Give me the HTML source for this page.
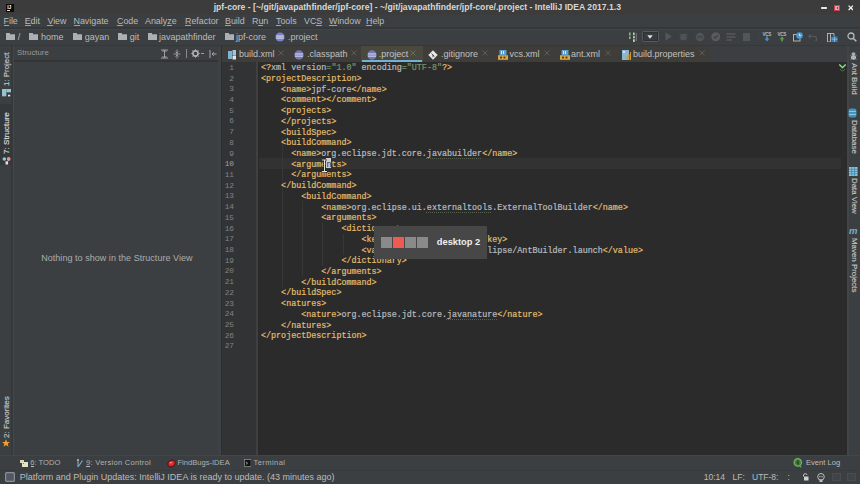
<!DOCTYPE html>
<html><head><meta charset="utf-8">
<style>
*{margin:0;padding:0;box-sizing:border-box}
html,body{width:860px;height:484px;overflow:hidden;background:#3c3f41;font-family:"Liberation Sans",sans-serif;color:#bbbbbb;position:relative}
.a{position:absolute;white-space:pre}
.code{font-family:"Liberation Mono",monospace;font-size:8.4px;-webkit-text-stroke:0.2px currentColor;line-height:10.72px;color:#b8bcc0}
.ln{font-family:"Liberation Mono",monospace;line-height:10.72px;color:#808386;text-align:right}
.t{color:#e2bd6e}
.av{color:#7a9266}
.at{color:#bababa}
.u{text-decoration:underline dotted #56604f;text-decoration-thickness:0.8px;text-underline-offset:1.6px}
.vt{transform-origin:0 0}
</style></head><body>

<div class="a" style="left:0px;top:0px;width:860px;height:15px;background:#3c3c3c;"></div>
<div class="a" style="left:213.70px;top:2.72px;font-size:8.6px;line-height:8.6px;color:#d8d8d8;font-weight:bold;letter-spacing:0.02px">jpf-core - [~/git/javapathfinder/jpf-core] - ~/git/javapathfinder/jpf-core/.project - IntelliJ IDEA 2017.1.3</div>
<div class="a" style="left:6px;top:4px;width:8px;height:8px;background:#0a0a0a;"></div>
<div class="a" style="left:7.20px;top:5.07px;font-size:5px;line-height:5px;color:#ffffff;font-weight:bold;">IJ</div>
<div class="a" style="left:7.3px;top:10px;width:3px;height:0.7px;background:#dddddd;"></div>
<div class="a" style="left:821px;top:7.2px;width:6px;height:1.5px;background:#e8e8e8;border-radius:0.7px"></div>
<div class="a" style="left:834.4px;top:5px;width:5.8px;height:5.8px;background:#e8a0a8;border:1.3px solid #c84050"></div>
<div class="a" style="left:836.6px;top:7.2px;width:1.4px;height:1.4px;background:#b03040;"></div>
<svg class="a" style="left:847.8px;top:5.2px" width="5.6" height="5.6" viewBox="0 0 5.6 5.6"><path d="M0.6 0.6L5 5M5 0.6L0.6 5" stroke="#f4f4f4" stroke-width="1.3"/></svg>
<div class="a" style="left:0px;top:15px;width:860px;height:13px;background:#3c3f41;"></div>
<div class="a" style="left:3.50px;top:16.77px;font-size:8.9px;line-height:8.9px;color:#bbbbbb;">File</div>
<div class="a" style="left:3.5px;top:25px;width:5.44px;height:0.8px;background:#a0a0a0;"></div>
<div class="a" style="left:24.70px;top:16.77px;font-size:8.9px;line-height:8.9px;color:#bbbbbb;">Edit</div>
<div class="a" style="left:24.7px;top:25px;width:5.94px;height:0.8px;background:#a0a0a0;"></div>
<div class="a" style="left:47.40px;top:16.77px;font-size:8.9px;line-height:8.9px;color:#bbbbbb;">View</div>
<div class="a" style="left:47.4px;top:25px;width:5.94px;height:0.8px;background:#a0a0a0;"></div>
<div class="a" style="left:73.50px;top:16.77px;font-size:8.9px;line-height:8.9px;color:#bbbbbb;">Navigate</div>
<div class="a" style="left:73.5px;top:25px;width:6.43px;height:0.8px;background:#a0a0a0;"></div>
<div class="a" style="left:117.00px;top:16.77px;font-size:8.9px;line-height:8.9px;color:#bbbbbb;">Code</div>
<div class="a" style="left:117.0px;top:25px;width:6.43px;height:0.8px;background:#a0a0a0;"></div>
<div class="a" style="left:145.00px;top:16.77px;font-size:8.9px;line-height:8.9px;color:#bbbbbb;">Analyze</div>
<div class="a" style="left:167.26px;top:25px;width:4.45px;height:0.8px;background:#a0a0a0;"></div>
<div class="a" style="left:185.00px;top:16.77px;font-size:8.9px;line-height:8.9px;color:#bbbbbb;">Refactor</div>
<div class="a" style="left:185.0px;top:25px;width:6.43px;height:0.8px;background:#a0a0a0;"></div>
<div class="a" style="left:225.00px;top:16.77px;font-size:8.9px;line-height:8.9px;color:#bbbbbb;">Build</div>
<div class="a" style="left:225.0px;top:25px;width:5.94px;height:0.8px;background:#a0a0a0;"></div>
<div class="a" style="left:252.00px;top:16.77px;font-size:8.9px;line-height:8.9px;color:#bbbbbb;">Run</div>
<div class="a" style="left:258.43px;top:25px;width:4.95px;height:0.8px;background:#a0a0a0;"></div>
<div class="a" style="left:276.00px;top:16.77px;font-size:8.9px;line-height:8.9px;color:#bbbbbb;">Tools</div>
<div class="a" style="left:276.0px;top:25px;width:5.44px;height:0.8px;background:#a0a0a0;"></div>
<div class="a" style="left:304.00px;top:16.77px;font-size:8.9px;line-height:8.9px;color:#bbbbbb;">VCS</div>
<div class="a" style="left:316.36px;top:25px;width:5.94px;height:0.8px;background:#a0a0a0;"></div>
<div class="a" style="left:329.00px;top:16.77px;font-size:8.9px;line-height:8.9px;color:#bbbbbb;">Window</div>
<div class="a" style="left:329.0px;top:25px;width:8.4px;height:0.8px;background:#a0a0a0;"></div>
<div class="a" style="left:366.00px;top:16.77px;font-size:8.9px;line-height:8.9px;color:#bbbbbb;">Help</div>
<div class="a" style="left:366.0px;top:25px;width:6.43px;height:0.8px;background:#a0a0a0;"></div>
<div class="a" style="left:0px;top:28px;width:860px;height:18px;background:#3c3f41;"></div>
<div class="a" style="left:0px;top:45px;width:860px;height:1.5px;background:#35383a;"></div>
<div class="a" style="left:0px;top:27px;width:860px;height:1.6px;background:#35383a;"></div>
<div class="a" style="left:0px;top:28.6px;width:860px;height:1.4px;background:#424547;"></div>
<div class="a" style="left:6px;top:33.5px;width:9px;height:6.5px;background:#aab0b6;"></div>
<div class="a" style="left:6px;top:32.5px;width:4px;height:2px;background:#aab0b6;"></div>
<div class="a" style="left:10px;top:33.5px;width:5px;height:1px;background:#8d9398;"></div>
<div class="a" style="left:17.70px;top:32.68px;font-size:9px;line-height:9px;color:#bbbbbb;">/</div>
<div class="a" style="left:29.4px;top:33.5px;width:9px;height:6.5px;background:#aab0b6;"></div>
<div class="a" style="left:29.4px;top:32.5px;width:4px;height:2px;background:#aab0b6;"></div>
<div class="a" style="left:33.4px;top:33.5px;width:5px;height:1px;background:#8d9398;"></div>
<div class="a" style="left:41.00px;top:32.68px;font-size:9px;line-height:9px;color:#bbbbbb;">home</div>
<div class="a" style="left:72.5px;top:33.5px;width:9px;height:6.5px;background:#aab0b6;"></div>
<div class="a" style="left:72.5px;top:32.5px;width:4px;height:2px;background:#aab0b6;"></div>
<div class="a" style="left:76.5px;top:33.5px;width:5px;height:1px;background:#8d9398;"></div>
<div class="a" style="left:84.70px;top:32.68px;font-size:9px;line-height:9px;color:#bbbbbb;">gayan</div>
<div class="a" style="left:117.6px;top:33.5px;width:9px;height:6.5px;background:#aab0b6;"></div>
<div class="a" style="left:117.6px;top:32.5px;width:4px;height:2px;background:#aab0b6;"></div>
<div class="a" style="left:121.6px;top:33.5px;width:5px;height:1px;background:#8d9398;"></div>
<div class="a" style="left:129.70px;top:32.68px;font-size:9px;line-height:9px;color:#bbbbbb;">git</div>
<div class="a" style="left:148px;top:33.5px;width:9px;height:6.5px;background:#aab0b6;"></div>
<div class="a" style="left:148px;top:32.5px;width:4px;height:2px;background:#aab0b6;"></div>
<div class="a" style="left:152px;top:33.5px;width:5px;height:1px;background:#8d9398;"></div>
<div class="a" style="left:159.00px;top:32.68px;font-size:9px;line-height:9px;color:#bbbbbb;">javapathfinder</div>
<div class="a" style="left:225px;top:33.5px;width:9px;height:6.5px;background:#aab0b6;"></div>
<div class="a" style="left:225px;top:32.5px;width:4px;height:2px;background:#aab0b6;"></div>
<div class="a" style="left:229px;top:33.5px;width:5px;height:1px;background:#8d9398;"></div>
<div class="a" style="left:236.00px;top:32.68px;font-size:9px;line-height:9px;color:#bbbbbb;">jpf-core</div>
<svg class="a" style="left:275px;top:32px" width="10" height="10" viewBox="0 0 10 10"><circle cx="5" cy="5" r="4.6" fill="#7b80c8"/><rect x="1.2" y="3.6" width="7.6" height="1" fill="#e6e6f4"/><rect x="1.2" y="5.6" width="7.6" height="1" fill="#e6e6f4"/></svg>
<div class="a" style="left:288.00px;top:32.68px;font-size:9px;line-height:9px;color:#bbbbbb;">.project</div>
<div class="a" style="left:0px;top:46px;width:13px;height:408.6px;background:#3c3f41;"></div>
<div class="a" style="left:11px;top:46px;width:1.7px;height:408.6px;background:#36393b;"></div>
<div class="a" style="left:12.7px;top:46px;width:1.6px;height:408.6px;background:#45484a;"></div>
<div class="a" style="left:0px;top:104px;width:11.8px;height:61px;background:#35383a;"></div>
<div class="a vt" style="left:2.90px;top:86.00px;font-size:7.9px;line-height:7.9px;color:#c4c4c4;transform:rotate(-90deg);-webkit-text-stroke:0.15px currentColor">1: Project</div>
<div class="a vt" style="left:2.90px;top:153.50px;font-size:8.1px;line-height:8.1px;color:#dddddd;transform:rotate(-90deg);-webkit-text-stroke:0.15px currentColor">7: Structure</div>
<div class="a vt" style="left:2.90px;top:437.50px;font-size:8.0px;line-height:8.0px;color:#c4c4c4;transform:rotate(-90deg);-webkit-text-stroke:0.15px currentColor">2: Favorites</div>
<div class="a" style="left:14px;top:46px;width:207px;height:408.6px;background:#3c3f41;"></div>
<div class="a" style="left:14px;top:60px;width:207px;height:1.5px;background:#323436;"></div>
<div class="a" style="left:17.10px;top:49.20px;font-size:7.8px;line-height:7.8px;color:#9a9a9a;">Structure</div>
<div class="a" style="left:41.20px;top:253.58px;font-size:9px;line-height:9px;color:#acacac;letter-spacing:0.04px">Nothing to show in the Structure View</div>
<div class="a" style="left:218px;top:46px;width:3px;height:408.6px;background:#3f4244;"></div>
<div class="a" style="left:221px;top:46px;width:1px;height:408.6px;background:#2c2f31;"></div>
<div class="a" style="left:222px;top:46px;width:625px;height:16px;background:#3c3f41;"></div>
<div class="a" style="left:222px;top:46px;width:488px;height:16px;background:#3e3d39;"></div>
<svg class="a" style="left:227.8px;top:49.5px" width="9" height="10" viewBox="0 0 9 10"><rect x="0" y="1" width="4" height="8" fill="#7fb3d5"/><rect x="4.5" y="0" width="3.5" height="5" fill="#9cc7e3"/><rect x="4.5" y="5.5" width="3.5" height="4" fill="#d9e6ee"/></svg>
<div class="a" style="left:239.00px;top:50.18px;font-size:9px;line-height:9px;color:#c0c0c0;">build.xml</div>
<svg class="a" style="left:277.5px;top:50.2px" width="6" height="6" viewBox="0 0 6 6"><path d="M0.5 0.5L5.5 5.5M5.5 0.5L0.5 5.5" stroke="#5e5e5e" stroke-width="0.9"/></svg>
<svg class="a" style="left:294.3px;top:49.5px" width="10" height="10" viewBox="0 0 10 10"><circle cx="5" cy="5" r="4.7" fill="#7378b4"/><rect x="1" y="3.4" width="8" height="1.1" fill="#d4d4ea"/><rect x="1" y="5.6" width="8" height="1.1" fill="#d4d4ea"/></svg>
<div class="a" style="left:306.90px;top:50.18px;font-size:9px;line-height:9px;color:#c0c0c0;">.classpath</div>
<svg class="a" style="left:351px;top:50.2px" width="6" height="6" viewBox="0 0 6 6"><path d="M0.5 0.5L5.5 5.5M5.5 0.5L0.5 5.5" stroke="#5e5e5e" stroke-width="0.9"/></svg>
<div class="a" style="left:361px;top:46px;width:62px;height:16px;background:#4b483e;"></div>
<div class="a" style="left:362px;top:60px;width:60px;height:2px;background:#6fb4d4;"></div>
<svg class="a" style="left:367px;top:49.5px" width="10" height="10" viewBox="0 0 10 10"><circle cx="5" cy="5" r="4.7" fill="#7378b4"/><rect x="1" y="3.4" width="8" height="1.1" fill="#d4d4ea"/><rect x="1" y="5.6" width="8" height="1.1" fill="#d4d4ea"/></svg>
<div class="a" style="left:378.70px;top:50.18px;font-size:9px;line-height:9px;color:#c4c4c4;">.project</div>
<svg class="a" style="left:409.9px;top:50.2px" width="6" height="6" viewBox="0 0 6 6"><path d="M0.5 0.5L5.5 5.5M5.5 0.5L0.5 5.5" stroke="#6b7360" stroke-width="0.9"/></svg>
<svg class="a" style="left:428.4px;top:49.5px" width="10" height="10" viewBox="0 0 10 10"><path d="M5 0.3 L9.7 5 L5 9.7 L0.3 5Z" fill="#e6e6e6"/><path d="M3.6 3.6 L6.4 6.4 M5 5 L5 7.2" stroke="#3c3c3c" stroke-width="0.9"/></svg>
<div class="a" style="left:441.00px;top:50.18px;font-size:9px;line-height:9px;color:#c0c0c0;">.gitignore</div>
<svg class="a" style="left:481.9px;top:50.2px" width="6" height="6" viewBox="0 0 6 6"><path d="M0.5 0.5L5.5 5.5M5.5 0.5L0.5 5.5" stroke="#5e5e5e" stroke-width="0.9"/></svg>
<svg class="a" style="left:497.9px;top:49.5px" width="10" height="10" viewBox="0 0 10 10"><rect x="1.5" y="0" width="7" height="5" fill="#5e9fd0"/><rect x="3" y="1" width="1" height="3" fill="#d8e8f4"/><rect x="5" y="1" width="1" height="3" fill="#d8e8f4"/><rect x="0" y="5.2" width="10" height="4.6" fill="#d6a74a"/><rect x="2" y="6.6" width="2" height="1.8" fill="#5a3a10"/><rect x="5.5" y="6.6" width="2" height="1.8" fill="#5a3a10"/></svg>
<div class="a" style="left:509.50px;top:50.18px;font-size:9px;line-height:9px;color:#c0c0c0;">vcs.xml</div>
<svg class="a" style="left:544px;top:50.2px" width="6" height="6" viewBox="0 0 6 6"><path d="M0.5 0.5L5.5 5.5M5.5 0.5L0.5 5.5" stroke="#5e5e5e" stroke-width="0.9"/></svg>
<svg class="a" style="left:559.8px;top:49.5px" width="10" height="10" viewBox="0 0 10 10"><rect x="1.5" y="0" width="7" height="5" fill="#5e9fd0"/><rect x="3" y="1" width="1" height="3" fill="#d8e8f4"/><rect x="5" y="1" width="1" height="3" fill="#d8e8f4"/><rect x="0" y="5.2" width="10" height="4.6" fill="#d6a74a"/><rect x="2" y="6.6" width="2" height="1.8" fill="#5a3a10"/><rect x="5.5" y="6.6" width="2" height="1.8" fill="#5a3a10"/></svg>
<div class="a" style="left:571.00px;top:50.18px;font-size:9px;line-height:9px;color:#c0c0c0;">ant.xml</div>
<svg class="a" style="left:605px;top:50.2px" width="6" height="6" viewBox="0 0 6 6"><path d="M0.5 0.5L5.5 5.5M5.5 0.5L0.5 5.5" stroke="#5e5e5e" stroke-width="0.9"/></svg>
<svg class="a" style="left:622px;top:49.5px" width="9" height="10" viewBox="0 0 9 10"><rect x="0" y="0" width="7" height="10" fill="#86b7d6"/><rect x="1" y="1" width="2" height="2" fill="#d0e4f0"/><rect x="4.5" y="6" width="1.2" height="4" fill="#d09a30"/><rect x="6.3" y="4" width="1.2" height="6" fill="#d09a30"/><rect x="8" y="2" width="1" height="8" fill="#d09a30"/></svg>
<div class="a" style="left:633.00px;top:50.18px;font-size:9px;line-height:9px;color:#c0c0c0;">build.properties</div>
<svg class="a" style="left:698.7px;top:50.2px" width="6" height="6" viewBox="0 0 6 6"><path d="M0.5 0.5L5.5 5.5M5.5 0.5L0.5 5.5" stroke="#5e5e5e" stroke-width="0.9"/></svg>
<div class="a" style="left:0px;top:44.7px;width:860px;height:1.8px;background:#35383a;"></div>
<div class="a" style="left:222px;top:62px;width:625px;height:392.6px;background:#2b2b2b;"></div>
<div class="a" style="left:222px;top:62px;width:34px;height:392.6px;background:#323335;"></div>
<div class="a" style="left:256px;top:62px;width:2px;height:392.6px;background:#404040;"></div>
<div class="a" style="left:258px;top:62px;width:1px;height:392.6px;background:#2a2a2a;"></div>
<div class="a" style="left:259px;top:158.4px;width:582px;height:10.7px;background:#323232;"></div>
<div class="a" style="left:843px;top:62px;width:1px;height:392px;background:#2e2e2e;"></div>
<div class="a" style="left:282.16px;top:137.04px;width:1px;height:150.08px;background:#373737;"></div>
<div class="a" style="left:302.32px;top:201.36px;width:1px;height:75.04px;background:#373737;"></div>
<div class="a" style="left:322.48px;top:222.8px;width:1px;height:42.88px;background:#373737;"></div>
<div class="a" style="left:342.64px;top:233.52px;width:1px;height:21.44px;background:#373737;"></div>
<div class="a code" style="left:261px;top:63.3px"><span class="t">&lt;?</span><span class="at">xml </span><span class="at">version</span><span class="av">=</span><span class="av">&quot;1.0&quot;</span><span class="at"> encoding</span><span class="av">=</span><span class="av">&quot;UTF-8&quot;</span><span class="t">?&gt;</span>
<span class="t">&lt;projectDescription&gt;</span>
    <span class="t">&lt;name&gt;</span>jpf-core<span class="t">&lt;/name&gt;</span>
    <span class="t">&lt;comment&gt;&lt;/comment&gt;</span>
    <span class="t">&lt;projects&gt;</span>
    <span class="t">&lt;/projects&gt;</span>
    <span class="t">&lt;buildSpec&gt;</span>
    <span class="t">&lt;buildCommand&gt;</span>
      <span class="t">&lt;name&gt;</span>org.eclipse.jdt.core.<span class="u">javabuilder</span><span class="t">&lt;/name&gt;</span>
      <span class="t">&lt;arguments&gt;</span>
      <span class="t">&lt;/arguments&gt;</span>
    <span class="t">&lt;/buildCommand&gt;</span>
        <span class="t">&lt;buildCommand&gt;</span>
            <span class="t">&lt;name&gt;</span>org.eclipse.ui.<span class="u">externaltools</span>.ExternalToolBuilder<span class="t">&lt;/name&gt;</span>
            <span class="t">&lt;arguments&gt;</span>
                <span class="t">&lt;dictionary&gt;</span>
                    <span class="t">&lt;key&gt;</span>LaunchConfigHandle<span class="t">&lt;/key&gt;</span>
                    <span class="t">&lt;value&gt;</span>&amp;lt;project&amp;gt;/eclipse/AntBuilder.launch<span class="t">&lt;/value&gt;</span>
                <span class="t">&lt;/dictionary&gt;</span>
            <span class="t">&lt;/arguments&gt;</span>
        <span class="t">&lt;/buildCommand&gt;</span>
    <span class="t">&lt;/buildSpec&gt;</span>
    <span class="t">&lt;natures&gt;</span>
        <span class="t">&lt;nature&gt;</span>org.eclipse.jdt.core.<span class="u">javanature</span><span class="t">&lt;/nature&gt;</span>
    <span class="t">&lt;/natures&gt;</span>
<span class="t">&lt;/projectDescription&gt;</span>
</div>
<div class="a ln" style="left:214px;top:62.8px;width:20px;font-size:7.8px;">1
2
3
4
5
6
7
8
9
<span style="color:#a4a3a3">10</span>
11
12
13
14
15
16
17
18
19
20
21
22
23
24
25
26
27</div>
<div class="a" style="left:847px;top:46px;width:13px;height:408.6px;background:#3c3f41;"></div>
<div class="a" style="left:846.7px;top:46px;width:2.4px;height:408.6px;background:#434547;"></div>
<svg class="a" style="left:837.5px;top:63px" width="9" height="9" viewBox="0 0 9 9"><path d="M1.3 1.5 L4.5 4.7 L7.7 1.5" stroke="#1f4a1f" stroke-width="2.6" fill="none"/><path d="M1.3 1.5 L4.5 4.7 L7.7 1.5" stroke="#a6d69e" stroke-width="1.3" fill="none"/><path d="M2 6.3 L4.5 8 L7 6.3" stroke="#4e7a4a" stroke-width="0.9" fill="none"/></svg>
<div class="a vt" style="left:857.50px;top:63.00px;font-size:7.9px;line-height:7.9px;color:#c4c4c4;transform:rotate(90deg);-webkit-text-stroke:0.15px currentColor">Ant Build</div>
<div class="a vt" style="left:857.50px;top:120.00px;font-size:7.9px;line-height:7.9px;color:#c4c4c4;transform:rotate(90deg);-webkit-text-stroke:0.15px currentColor">Database</div>
<div class="a vt" style="left:857.50px;top:178.00px;font-size:7.9px;line-height:7.9px;color:#c4c4c4;transform:rotate(90deg);-webkit-text-stroke:0.15px currentColor">Data View</div>
<div class="a vt" style="left:857.50px;top:238.00px;font-size:7.9px;line-height:7.9px;color:#c4c4c4;transform:rotate(90deg);-webkit-text-stroke:0.15px currentColor">Maven Projects</div>
<svg class="a" style="left:850.3px;top:52px" width="7" height="9" viewBox="0 0 7 9"><ellipse cx="3.5" cy="2" rx="2" ry="1.8" fill="#a8acb0"/><ellipse cx="3.5" cy="5.5" rx="2.6" ry="2.2" fill="#c0c4c8"/><path d="M0.3 3.5L6.7 7.5M6.7 3.5L0.3 7.5" stroke="#9a9ea2" stroke-width="0.7"/></svg>
<svg class="a" style="left:848.4px;top:107.8px" width="9" height="10" viewBox="0 0 9 10"><rect x="0.5" y="0.5" width="8" height="9" rx="2.2" fill="#4293b8"/><path d="M1 3.4H8M1 6.4H8" stroke="#9fd2ea" stroke-width="0.9"/></svg>
<svg class="a" style="left:849px;top:166.5px" width="8.5" height="9" viewBox="0 0 8.5 9"><rect x="0" y="0" width="8.5" height="9" fill="#8ac6e0"/><path d="M0 2.3H8.5M0 4.5H8.5M0 6.8H8.5M2.8 0V9M5.6 0V9" stroke="#3f87ad" stroke-width="0.8"/></svg>
<svg class="a" style="left:848.8px;top:227px" width="9" height="8" viewBox="0 0 9 8"><text x="0" y="7.4" font-family="Liberation Sans" font-size="9.5" font-style="italic" font-weight="bold" fill="#72b2cf">m</text></svg>
<div class="a" style="left:0px;top:454.6px;width:860px;height:15.4px;background:#3c3f41;"></div>
<div class="a" style="left:0px;top:454.6px;width:860px;height:1.8px;background:#434648;"></div>
<svg class="a" style="left:19.8px;top:459px" width="8" height="8" viewBox="0 0 8 8"><rect x="0" y="1" width="4" height="3" fill="#d8d8b0"/><rect x="2" y="3" width="6" height="5" fill="#e4e4c0"/><rect x="3" y="4" width="1" height="1" fill="#777"/></svg>
<div class="a" style="left:30.20px;top:458.77px;font-size:7.6px;line-height:7.6px;color:#b0b0b0;">6: TODO</div>
<div class="a" style="left:30.6px;top:466px;width:3.6px;height:0.6px;background:#bbbbbb;"></div>
<svg class="a" style="left:75.5px;top:459px" width="8" height="8.5" viewBox="0 0 8 8.5"><path d="M2 0.5V8M2 8L6.5 1.5" stroke="#7aa6c2" stroke-width="1.2" fill="none"/><circle cx="2" cy="1" r="1.1" fill="#aaa"/></svg>
<div class="a" style="left:86.00px;top:458.77px;font-size:7.6px;line-height:7.6px;color:#b0b0b0;letter-spacing:0.26px">9: Version Control</div>
<div class="a" style="left:86.4px;top:466px;width:3.6px;height:0.6px;background:#bbbbbb;"></div>
<svg class="a" style="left:166.6px;top:458.5px" width="9" height="9" viewBox="0 0 9 9"><ellipse cx="4.5" cy="4.5" rx="3.9" ry="3.1" transform="rotate(-25 4.5 4.5)" fill="#e02828" stroke="#3a1010" stroke-width="0.8"/><ellipse cx="3.8" cy="3.8" rx="1.4" ry="0.8" fill="#ff8080"/></svg>
<div class="a" style="left:177.40px;top:458.77px;font-size:7.6px;line-height:7.6px;color:#b0b0b0;">FindBugs-IDEA</div>
<svg class="a" style="left:243.6px;top:458.5px" width="7.5" height="8" viewBox="0 0 7.5 8"><rect x="0.4" y="0.4" width="6.7" height="7.2" fill="#111" stroke="#9a9a9a" stroke-width="0.7"/><path d="M2 3L3.5 4.2L2 5.4" stroke="#ddd" stroke-width="0.7" fill="none"/></svg>
<div class="a" style="left:253.50px;top:458.77px;font-size:7.6px;line-height:7.6px;color:#b0b0b0;letter-spacing:0.4px">Terminal</div>
<svg class="a" style="left:793px;top:458px" width="10" height="10" viewBox="0 0 10 10"><circle cx="4.8" cy="4.4" r="3.7" fill="#3f7a3a" stroke="#74b06a" stroke-width="1.2"/><path d="M6.5 7.5L8.3 9.5" stroke="#74b06a" stroke-width="1.1"/><rect x="4.2" y="2.6" width="1.3" height="3.8" fill="#1f3f1c"/></svg>
<div class="a" style="left:806.00px;top:458.97px;font-size:7.6px;line-height:7.6px;color:#bdbdbd;">Event Log</div>
<div class="a" style="left:0px;top:470px;width:860px;height:14px;background:#3c3f41;"></div>
<div class="a" style="left:0px;top:469.5px;width:860px;height:1px;background:#383b3d;"></div>
<svg class="a" style="left:5px;top:472px" width="10" height="10" viewBox="0 0 10 10"><rect x="0.6" y="0.6" width="8.8" height="8.8" rx="1" fill="#505866" stroke="#8b8f93" stroke-width="1.2"/></svg>
<div class="a" style="left:19.80px;top:472.68px;font-size:9px;line-height:9px;color:#bbbbbb;">Platform and Plugin Updates: IntelliJ IDEA is ready to update. (43 minutes ago)</div>
<div class="a" style="left:703.70px;top:472.60px;font-size:8.5px;line-height:8.5px;color:#bbbbbb;">10:14</div>
<div class="a" style="left:732.60px;top:472.60px;font-size:8.5px;line-height:8.5px;color:#bbbbbb;">LF:</div>
<div class="a" style="left:752.00px;top:472.60px;font-size:8.5px;line-height:8.5px;color:#bbbbbb;">UTF-8:</div>
<div class="a" style="left:787.40px;top:472.60px;font-size:8.5px;line-height:8.5px;color:#bbbbbb;">:</div>
<svg class="a" style="left:802px;top:473px" width="7" height="8" viewBox="0 0 7 8"><path d="M1.5 3.5V2A1.8 1.8 0 0 1 5 2" stroke="#cfcfcf" stroke-width="0.9" fill="none"/><rect x="2" y="3.5" width="4.5" height="4" fill="#cfcfcf"/></svg>
<svg class="a" style="left:817px;top:472.5px" width="8" height="9" viewBox="0 0 8 9"><circle cx="4" cy="3.8" r="3.3" fill="none" stroke="#bdbdbd" stroke-width="1"/><rect x="2.5" y="6.5" width="3" height="2.5" fill="#bdbdbd"/><rect x="2.3" y="3" width="1.2" height="1.2" fill="#bdbdbd"/><rect x="4.5" y="3" width="1.2" height="1.2" fill="#bdbdbd"/></svg>
<div class="a" style="left:832px;top:472.5px;width:8.5px;height:8.5px;background:#414446;border:1px solid #4a4d4f"></div>
<div class="a" style="left:847px;top:472.5px;width:8.5px;height:8.5px;background:#414446;border:1px solid #4a4d4f"></div>
<svg class="a" style="left:2px;top:89px" width="9" height="8" viewBox="0 0 9 8"><rect x="0" y="0" width="4.3" height="7.3" fill="#94c4d4"/><rect x="4.3" y="0" width="4.7" height="3.3" fill="#94c4d4"/><rect x="6" y="5.8" width="2.2" height="1.6" fill="#e8e8e8"/></svg>
<svg class="a" style="left:2px;top:154.5px" width="9" height="11" viewBox="0 0 9 11"><circle cx="2.3" cy="4" r="1.8" fill="#8ec4e0"/><circle cx="6.7" cy="4" r="1.9" fill="#e49494"/><rect x="3.5" y="6.3" width="2.6" height="3.2" fill="#e6e2d6"/></svg>
<svg class="a" style="left:2.3px;top:438.5px" width="8" height="8" viewBox="0 0 8 8"><path d="M4 0.2L5.1 2.9L7.9 3L5.7 4.8L6.5 7.7L4 6.1L1.5 7.7L2.3 4.8L0.1 3L2.9 2.9Z" fill="#f0a030"/></svg>
<svg class="a" style="left:159.8px;top:48.5px" width="9" height="10" viewBox="0 0 9 10"><path d="M1 1H8M1 9H8M4.5 1V9M2.5 3L4.5 1L6.5 3M2.5 7L4.5 9L6.5 7" stroke="#a8a8a8" stroke-width="0.9" fill="none"/></svg>
<svg class="a" style="left:172.8px;top:48.5px" width="8" height="10" viewBox="0 0 8 10"><path d="M4 0.5V9.5M0.5 5H7.5M2.5 2.5L4 4L5.5 2.5M2.5 7.5L4 6L5.5 7.5" stroke="#a0a0a0" stroke-width="0.9" fill="none"/></svg>
<div class="a" style="left:186px;top:48.5px;width:1px;height:9.5px;background:#8a8a8a;"></div>
<svg class="a" style="left:191px;top:49px" width="9" height="9" viewBox="0 0 9 9"><circle cx="4.5" cy="4.5" r="2.6" fill="none" stroke="#b0b0b0" stroke-width="1.6"/><path d="M4.5 0.3V2M4.5 7V8.7M0.3 4.5H2M7 4.5H8.7M1.5 1.5L2.7 2.7M6.3 6.3L7.5 7.5M1.5 7.5L2.7 6.3M6.3 2.7L7.5 1.5" stroke="#b0b0b0" stroke-width="1"/></svg>
<div class="a" style="left:201px;top:53px;width:2.8px;height:1px;background:#a0a0a0;"></div>
<svg class="a" style="left:208.6px;top:48.5px" width="8" height="10" viewBox="0 0 8 10"><path d="M1 1V9M7.5 5H3M4.8 3.2L3 5L4.8 6.8" stroke="#a8a8a8" stroke-width="1" fill="none"/></svg>
<svg class="a" style="left:627.5px;top:31.5px" width="10" height="10.5" viewBox="0 0 10 10.5"><rect x="1" y="0.5" width="1.6" height="3" fill="#7fbf70"/><rect x="1" y="4.5" width="1.6" height="2.5" fill="#7fbf70"/><rect x="5" y="0.5" width="1.6" height="2.5" fill="#c8c8c8"/><rect x="5" y="3.8" width="1.8" height="2.6" fill="#b8b8b8"/><rect x="5" y="7.3" width="1.8" height="2.6" fill="#c8c8c8"/><rect x="7.8" y="1" width="1" height="8" fill="#7a7a7a"/></svg>
<div class="a" style="left:641.5px;top:31.3px;width:17.2px;height:11px;background:#393c3e;border:1px solid #575a5c;border-radius:1.5px;box-shadow:inset 0 0 0 1px #2e3133"></div>
<svg class="a" style="left:646.6px;top:34.8px" width="6" height="4" viewBox="0 0 6 4"><path d="M0.3 0.3H5.7L3 3.7Z" fill="#e0e0e0"/></svg>
<svg class="a" style="left:664.6px;top:32px" width="7" height="9" viewBox="0 0 7 9"><path d="M0.5 0.5L6.8 4.5L0.5 8.5Z" fill="#555859"/></svg>
<svg class="a" style="left:679px;top:32px" width="9" height="9" viewBox="0 0 9 9"><circle cx="4.5" cy="5" r="3.2" fill="#505354"/><path d="M0.5 2L2.5 3M8.5 2L6.5 3M0.5 5H2M7 5H8.5M1 8.5L2.5 7M8 8.5L6.5 7" stroke="#505354" stroke-width="0.9"/></svg>
<svg class="a" style="left:694.6px;top:32px" width="10" height="10" viewBox="0 0 10 10"><circle cx="5" cy="5" r="4.3" fill="#535657"/><path d="M1.5 3.5L8.5 6.5M1.5 6.5L8.5 3.5" stroke="#3f4243" stroke-width="0.8"/></svg>
<svg class="a" style="left:710.6px;top:32px" width="9.5" height="9.5" viewBox="0 0 9.5 9.5"><circle cx="4.75" cy="4.75" r="4.5" fill="#595c5d"/><path d="M2.7 4.7L4.3 6.2L6.9 3.2" stroke="#3b3d3f" stroke-width="1.1" fill="none"/></svg>
<svg class="a" style="left:726px;top:32.5px" width="10" height="9" viewBox="0 0 10 9"><path d="M0.5 1H9.5M0.5 4H9.5M0.5 7H6" stroke="#555859" stroke-width="1.5"/></svg>
<div class="a" style="left:742.8px;top:33px;width:7.7px;height:7.6px;background:#535657;"></div>
<div class="a" style="left:758px;top:31px;width:1px;height:11px;background:#404345;"></div>
<svg class="a" style="left:761.6px;top:31px" width="10" height="11" viewBox="0 0 10 11"><text x="0.6" y="4.6" font-family="Liberation Sans" font-size="4.6" font-weight="bold" fill="#b8b8b8" textLength="8.8">VCS</text><rect x="4.1" y="5.4" width="1.8" height="2.6" fill="#4a8fc0"/><path d="M2.5 7.8L5 10.4L7.5 7.8Z" fill="#4a8fc0"/></svg>
<svg class="a" style="left:777px;top:31px" width="10" height="11" viewBox="0 0 10 11"><text x="0.6" y="4.6" font-family="Liberation Sans" font-size="4.6" font-weight="bold" fill="#b8b8b8" textLength="8.8">VCS</text><path d="M2.5 8.2L5 5.6L7.5 8.2Z" fill="#5a9a4a"/><rect x="4.1" y="7.8" width="1.8" height="2.6" fill="#5a9a4a"/></svg>
<svg class="a" style="left:793px;top:31.5px" width="10" height="10" viewBox="0 0 10 10"><rect x="0.5" y="2.5" width="6.5" height="6.5" fill="none" stroke="#b0b0b0" stroke-width="1"/><circle cx="6.5" cy="3.5" r="3.3" fill="#4a9ad0"/><path d="M6.5 1.8V3.7H8" stroke="#fff" stroke-width="0.8" fill="none"/></svg>
<svg class="a" style="left:808px;top:32.5px" width="9.5" height="8.5" viewBox="0 0 9.5 8.5"><path d="M2.5 1.5L0.8 3.3L2.5 5 M1 3.3H6A2.6 2.6 0 0 1 6 8.5H3" stroke="#575a5b" stroke-width="1.1" fill="none"/></svg>
<div class="a" style="left:822px;top:31px;width:1px;height:11px;background:#404345;"></div>
<svg class="a" style="left:827px;top:31.5px" width="10.5" height="10.5" viewBox="0 0 10.5 10.5"><path d="M0.5 1.5H7V4" stroke="#b0b0b0" stroke-width="1" fill="none"/><rect x="0.5" y="1.5" width="3" height="8.5" fill="none" stroke="#b0b0b0" stroke-width="1"/><rect x="4.5" y="4.5" width="6" height="5.5" fill="#3b7fb2"/><path d="M4.5 7.2H10.5M7.5 4.5V10" stroke="#9cc8ea" stroke-width="0.7"/></svg>
<svg class="a" style="left:846.7px;top:32px" width="10" height="10" viewBox="0 0 10 10"><circle cx="4" cy="4" r="3" fill="none" stroke="#b8b8b8" stroke-width="1.3"/><path d="M6.2 6.2L9.3 9.3" stroke="#b8b8b8" stroke-width="1.6"/></svg>
<div class="a" style="left:326px;top:158px;width:5px;height:10.3px;background:#cfcfcf;"></div>
<div class="a code" style="left:326.5px;top:159.78px;color:#2b2b2b;-webkit-text-stroke:0">n</div>
<svg class="a" style="left:320.5px;top:159px" width="7" height="13.5" viewBox="0 0 7 13.5"><path d="M1 1H6M1 12.5H6M3.5 1V12.5" stroke="#1a1a1a" stroke-width="2.2"/><path d="M1 1H6M1 12.5H6M3.5 1V12.5" stroke="#e4e4e4" stroke-width="1"/></svg>
<div class="a" style="left:374.2px;top:226px;width:113.2px;height:32.5px;background:#474747;"></div>
<div class="a" style="left:380.9px;top:236.6px;width:11.3px;height:11.4px;background:#8a8a8a;"></div>
<div class="a" style="left:392.7px;top:236.6px;width:11.6px;height:11.4px;background:#ef5b52;"></div>
<div class="a" style="left:404.6px;top:236.6px;width:11.4px;height:11.4px;background:#8a8a8a;"></div>
<div class="a" style="left:416.5px;top:236.6px;width:11.7px;height:11.4px;background:#8a8a8a;"></div>
<div class="a" style="left:436.80px;top:238.33px;font-size:9.3px;line-height:9.3px;color:#f0f0f0;font-weight:bold;">desktop 2</div>
</body></html>
